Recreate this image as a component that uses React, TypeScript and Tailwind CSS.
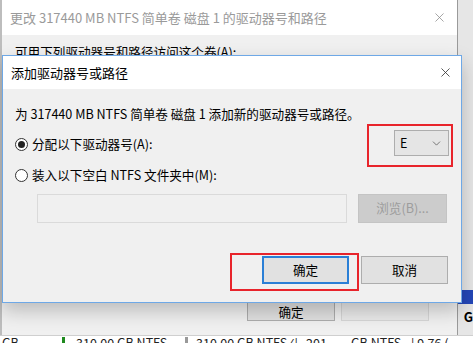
import { ChevronDown, X } from 'lucide-react'

const font = { fontFamily: '"Noto Sans CJK SC", "Noto Sans", sans-serif' }

function Radio({ checked }: { checked?: boolean }) {
  return (
    <span className="w-[13px] h-[13px] rounded-full border border-[#333] bg-white flex items-center justify-center shrink-0">
      {checked && <span className="w-[7px] h-[7px] rounded-full bg-[#222]" />}
    </span>
  )
}

export default function App() {
  return (
    <div className="relative w-[473px] h-[343px] overflow-hidden bg-[#f0f0f0] text-[12.6px] text-black" style={font}>
      <div className="flex h-[335px]">
        {/* Back dialog */}
        <div className="w-[461px] flex flex-col border-l-2 border-[#bdbdbd] bg-[#f0f0f0]">
          <div className="h-[35px] bg-white flex items-center justify-between pl-[8px] pr-[10px] text-[13px] text-[#9a9a9a]">
            <span>更改 317440 MB NTFS 简单卷 磁盘 1 的驱动器号和路径</span>
            <X size={15} strokeWidth={1.2} className="text-[#888]" />
          </div>
          <div className="pl-[13px] pt-[9px] leading-[16px]">可用下列驱动器号和路径访问这个卷(A):</div>
          <div className="flex-1" />
          <div className="flex gap-[6px] pl-[245px] pb-[14px]">
            <div className="w-[88px] h-[23px] border border-[#adadad] bg-[#e1e1e1] flex items-end justify-center pb-[1px] leading-[14px]">确定</div>
            <div className="w-[88px] h-[23px] border border-[#d6d6d6] bg-[#eaeaea]" />
          </div>
        </div>
        {/* Right strip */}
        <div className="flex-1 flex flex-col border-l border-[#9a9a9a] bg-[#e6e6e6]">
          <div className="h-[290px]" />
          <div className="h-[14px] bg-[#2447b8]" />
          <div className="pt-[6px] pl-[6px] font-bold text-[13px] leading-[14px]">G</div>
        </div>
      </div>

      {/* Disk list strip */}
      <div className="h-[8px] bg-white border-t border-[#cfcfcf] flex items-start text-[12.5px] leading-[14px] text-[#222] whitespace-nowrap">
        <span className="pl-[2px] w-[62px]">GB</span>
        <span className="w-[3px] h-[8px] bg-[#1f8a1f] mt-[1px]" />
        <span className="pl-[11px] w-[120px]">310.00 GB NTFS</span>
        <span className="w-[3px] h-[8px] bg-[#999] mt-[1px]" />
        <span className="pl-[8px] w-[118px]">310.00 GB NTFS ⁄ |</span>
        <span className="w-[45px]">201 . .</span>
        <span className="w-[60px]">GB NTFS</span>
        <span>| 9.76 (</span>
      </div>

      {/* Front dialog */}
      <div className="absolute left-[2px] top-[55px] w-[460px] h-[248px] flex flex-col border border-[#6ea8e6] bg-[#f0f0f0] shadow-[0_8px_18px_rgba(0,0,0,0.22)]">
        <div className="h-[33px] bg-white flex items-center justify-between pl-[8px] pr-[8px] text-[13px] shrink-0">
          <span>添加驱动器号或路径</span>
          <X size={15} strokeWidth={1.3} className="text-[#333]" />
        </div>
        <div className="flex flex-col pl-[12px] pr-[8px]">
          <div className="pt-[17px] leading-[16px]">为 317440 MB NTFS 简单卷 磁盘 1 添加新的驱动器号或路径。</div>

          <div className="mt-[2px] flex items-start justify-between">
            <div className="mt-[12px] flex items-center gap-[4px] leading-[16px]">
              <Radio checked />
              <span>分配以下驱动器号(A):</span>
            </div>
            <div className="w-[86px] h-[43px] border-2 border-[#e8242b] pt-[4px] pl-[25px] pr-[2px]">
              <div className="h-[26px] border border-[#adadad] bg-[#e5e5e5] flex items-center justify-between pl-[5px] pr-[5px] text-[12.5px]">
                <span>E</span>
                <ChevronDown size={13} strokeWidth={1.4} className="text-[#555]" />
              </div>
            </div>
          </div>

          <div className="flex items-center gap-[4px] leading-[16px]">
            <Radio />
            <span>装入以下空白 NTFS 文件夹中(M):</span>
          </div>

          <div className="mt-[11px] flex items-center pl-[22px] gap-[11px]">
            <div className="w-[310px] h-[29px] border border-[#dadada] bg-[#f0f0f0]" />
            <div className="w-[89px] h-[29px] border border-[#c4c4c4] bg-[#cccccc] flex items-center justify-center text-[#9d9d9d]">浏览(B)...</div>
          </div>

          <div className="mt-[30px] flex items-start pl-[215px] gap-[2px]">
            <div className="w-[129px] h-[38px] border-2 border-[#e8242b] pt-[1px] pl-[30px] pr-[8px]">
              <div className="h-[28px] border-2 border-[#2a7fd6] bg-[#e1e1e1] flex items-center justify-center">确定</div>
            </div>
            <div className="mt-[3px] w-[87px] h-[28px] border border-[#adadad] bg-[#e1e1e1] flex items-center justify-center">取消</div>
          </div>
        </div>
      </div>
    </div>
  )
}
